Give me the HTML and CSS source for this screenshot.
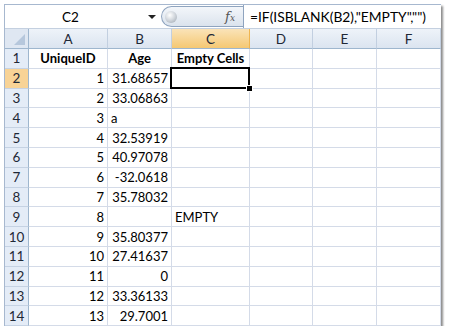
FILE: index.html
```html
<!DOCTYPE html>
<html>
<head>
<meta charset="utf-8">
<link rel="stylesheet" href="styles.css">
</head>
<body>
<div class="window">
  <div class="fbar">
    <div class="namebox"><span class="ref">C2</span><span class="arrow"></span></div>
    <div class="pill"><span class="knob"></span><span class="fx"><i>f</i><i class="x">x</i></span></div>
    <div class="formula">=IF(ISBLANK(B2),"EMPTY","")</div>
  </div>
  <div class="grid">
    <div class="corner"></div><div class="ch">A</div><div class="ch">B</div><div class="ch sel">C</div><div class="ch">D</div><div class="ch">E</div><div class="ch last">F</div>

    <div class="rh">1</div><div class="c ctr b">UniqueID</div><div class="c ctr b">Age</div><div class="c ctr b">Empty Cells</div><div class="c"></div><div class="c"></div><div class="c"></div>
    <div class="rh sel">2</div><div class="c r">1</div><div class="c r">31.68657</div><div class="c active"></div><div class="c"></div><div class="c"></div><div class="c"></div>
    <div class="rh">3</div><div class="c r">2</div><div class="c r">33.06863</div><div class="c"></div><div class="c"></div><div class="c"></div><div class="c"></div>
    <div class="rh">4</div><div class="c r">3</div><div class="c">a</div><div class="c"></div><div class="c"></div><div class="c"></div><div class="c"></div>
    <div class="rh">5</div><div class="c r">4</div><div class="c r">32.53919</div><div class="c"></div><div class="c"></div><div class="c"></div><div class="c"></div>
    <div class="rh">6</div><div class="c r">5</div><div class="c r">40.97078</div><div class="c"></div><div class="c"></div><div class="c"></div><div class="c"></div>
    <div class="rh">7</div><div class="c r">6</div><div class="c r">-32.0618</div><div class="c"></div><div class="c"></div><div class="c"></div><div class="c"></div>
    <div class="rh">8</div><div class="c r">7</div><div class="c r">35.78032</div><div class="c"></div><div class="c"></div><div class="c"></div><div class="c"></div>
    <div class="rh">9</div><div class="c r">8</div><div class="c"></div><div class="c">EMPTY</div><div class="c"></div><div class="c"></div><div class="c"></div>
    <div class="rh">10</div><div class="c r">9</div><div class="c r">35.80377</div><div class="c"></div><div class="c"></div><div class="c"></div><div class="c"></div>
    <div class="rh">11</div><div class="c r">10</div><div class="c r">27.41637</div><div class="c"></div><div class="c"></div><div class="c"></div><div class="c"></div>
    <div class="rh">12</div><div class="c r">11</div><div class="c r">0</div><div class="c"></div><div class="c"></div><div class="c"></div><div class="c"></div>
    <div class="rh">13</div><div class="c r">12</div><div class="c r">33.36133</div><div class="c"></div><div class="c"></div><div class="c"></div><div class="c"></div>
    <div class="rh">14</div><div class="c r">13</div><div class="c r">29.7001</div><div class="c"></div><div class="c"></div><div class="c"></div><div class="c"></div>
  </div>
</div>
</body>
</html>
```

FILE: styles.css
```css
html, body {
  margin: 0;
  padding: 0;
  background: #ffffff;
}
body {
  padding: 4px 0 0 4px;
  font-family: Lato, "Open Sans", Arial, sans-serif;
  font-size: 13px;
  color: #000;
}
.window {
  width: 437px;
  background: #fff;
  border-top: 1px solid #a7b8cf;
  border-left: 1px solid #a7b8cf;
  box-shadow: 2px 2px 2px rgba(0,0,0,0.45);
  box-sizing: border-box;
}
.fbar {
  display: flex;
  height: 24px;
  border-bottom: 1px solid #c4d0e0;
  box-sizing: border-box;
  align-items: stretch;
}
.namebox {
  width: 156px;
  display: flex;
  align-items: center;
  position: relative;
}
.ref {
  flex: 1;
  text-align: center;
  padding-right: 12px;
  font-size: 13.5px;
}
.arrow {
  width: 0;
  height: 0;
  border-left: 4px solid transparent;
  border-right: 4px solid transparent;
  border-top: 4px solid #222;
  margin-right: 5px;
}
.pill {
  width: 82px;
  margin: 1px 0 1px 0;
  border: 1px solid #8fa4bf;
  border-right: none;
  border-radius: 11px 0 0 11px;
  background: linear-gradient(#f3f6fa, #dbe3ed);
  display: flex;
  align-items: center;
  justify-content: space-between;
  padding: 0 8px 0 3px;
  box-sizing: border-box;
}
.knob {
  width: 12px;
  height: 12px;
  border-radius: 50%;
  background: radial-gradient(circle at 40% 35%, #ffffff 0%, #d4d9df 45%, #9aa3ad 100%);
}
.fx {
  font-family: "DejaVu Serif", "Liberation Serif", serif;
  font-size: 13px;
  color: #555;
  line-height: 1;
}
.fx .x {
  font-size: 9px;
}
.formula {
  flex: 1;
  border-left: 1px solid #8fa4bf;
  padding-left: 6px;
  display: flex;
  align-items: center;
  font-size: 13.8px;
}
.grid {
  display: grid;
  grid-template-columns: 24px 79px 64px 78px 63px 64px 64px;
  grid-template-rows: 20px repeat(14, 19.8px);
}
.corner {
  background: #dfe7f2;
  border-right: 1px solid #9eb6ce;
  border-bottom: 1px solid #9eb6ce;
  position: relative;
}
.corner::after {
  content: "";
  position: absolute;
  right: 3px;
  bottom: 3px;
  width: 0;
  height: 0;
  border-left: 11px solid transparent;
  border-bottom: 11px solid #b6c7dc;
}
.ch {
  background: linear-gradient(#eef3f9, #dbe4f0);
  border-right: 1px solid #c2cfe0;
  border-bottom: 1px solid #9eb6ce;
  display: flex;
  align-items: center;
  justify-content: center;
  color: #1e2836;
  font-size: 13.5px;
}
.ch.sel {
  background: linear-gradient(#fae3b8, #f5c873);
  border-right-color: #f0b550;
}
.rh {
  background: #e4ecf7;
  border-right: 1px solid #9eb6ce;
  border-bottom: 1px solid #c5d2e3;
  display: flex;
  align-items: center;
  justify-content: center;
  color: #1e2836;
  font-size: 13.5px;
}
.rh.sel {
  background: #f8d396;
}
.c {
  border-right: 1px solid #d4dbe8;
  border-bottom: 1px solid #d4dbe8;
  display: flex;
  align-items: center;
  padding: 0 3px;
  white-space: nowrap;
  overflow: visible;
  box-sizing: border-box;
}
.c.r { justify-content: flex-end; }
.c.ctr { justify-content: center; }
.c.b { font-weight: bold; }
.c.active {
  position: relative;
}
.c.active::before {
  content: "";
  position: absolute;
  left: -2px;
  top: -2px;
  right: -1px;
  bottom: -1px;
  border: 2px solid #000;
}
.c.active::after {
  content: "";
  position: absolute;
  right: -4px;
  bottom: -4px;
  width: 5px;
  height: 5px;
  background: #000;
  border: 1px solid #fff;
}
```
